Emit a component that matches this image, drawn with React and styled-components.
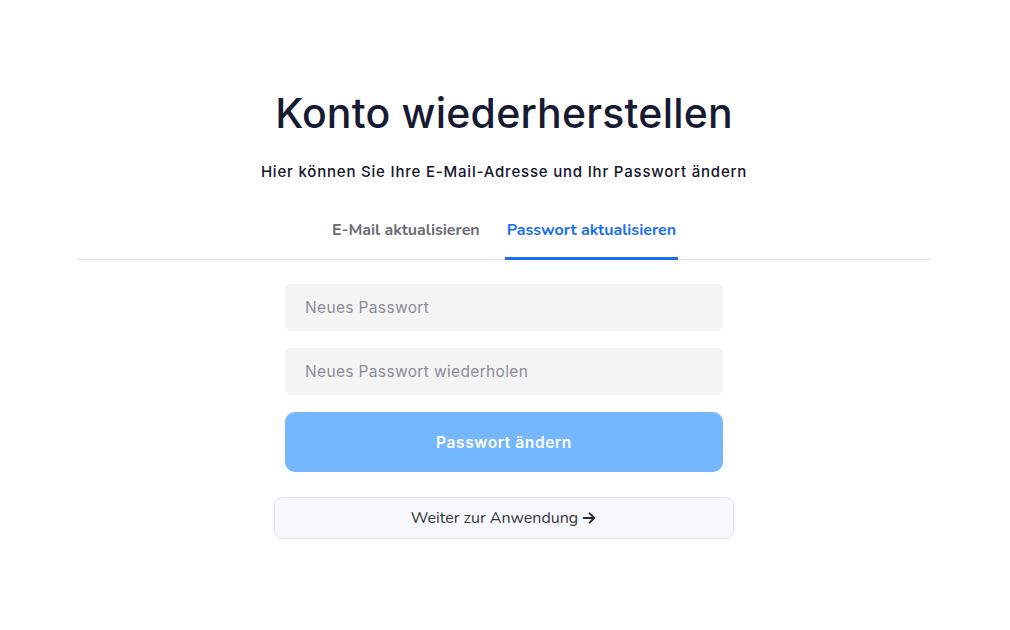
import React, { useState } from 'react';
import styled, { createGlobalStyle } from 'styled-components';

const GlobalStyle = createGlobalStyle`
  body {
    margin: 0;
    background: #ffffff;
    font-family: "Inter", "Noto Sans", sans-serif;
  }
`;

const Page = styled.div`
  width: 100%;
  min-height: 630px;
  display: flex;
  flex-direction: column;
  align-items: center;
  padding: 88px 80px 0 78px;
  box-sizing: border-box;
`;

const Title = styled.h1`
  margin: 0;
  font-family: "Inter", sans-serif;
  font-size: 41px;
  font-weight: 500;
  letter-spacing: 0.2px;
  color: #161b33;
  line-height: 50px;
`;

const Subtitle = styled.p`
  margin: 24px 0 0;
  font-family: "Inter", sans-serif;
  font-size: 15px;
  font-weight: 500;
  letter-spacing: 0.8px;
  color: #11142a;
  line-height: 20px;
`;

const Tabs = styled.div`
  margin-top: 29px;
  width: 100%;
  display: flex;
  justify-content: center;
  gap: 23px;
  border-bottom: 1px solid #dcdde3;
`;

const Tab = styled.button`
  background: none;
  border: none;
  padding: 8px 2px 16px;
  margin-bottom: -1px;
  font-family: "Nunito", "Noto Sans", sans-serif;
  font-size: 16px;
  font-weight: 700;
  color: ${(p) => (p.$active ? '#1a6ff0' : '#6b6b70')};
  border-bottom: 3px solid ${(p) => (p.$active ? '#1a6ff0' : 'transparent')};
  cursor: pointer;
`;

const Form = styled.form`
  margin-top: 24px;
  width: 438px;
  display: flex;
  flex-direction: column;
  gap: 17px;
`;

const Input = styled.input`
  height: 47px;
  border: none;
  border-radius: 6px;
  background: #f4f4f4;
  padding: 0 20px;
  font-family: "Inter", sans-serif;
  font-size: 15.5px;
  letter-spacing: 0.35px;
  color: #222;
  outline: none;

  &::placeholder {
    color: #8b8c99;
  }
`;

const Submit = styled.button`
  height: 60px;
  border: none;
  border-radius: 10px;
  background: #74b7fe;
  color: #ffffff;
  font-family: "Inter", sans-serif;
  font-size: 15.5px;
  font-weight: 600;
  letter-spacing: 0.6px;
  cursor: pointer;
`;

const Continue = styled.button`
  margin-top: 25px;
  width: 460px;
  height: 42px;
  border: 1px solid #e1e3eb;
  border-radius: 8px;
  background: #f7f8fc;
  color: #333338;
  font-family: "Nunito", "Noto Sans", sans-serif;
  font-size: 16px;
  display: flex;
  align-items: center;
  justify-content: center;
  gap: 3px;
  cursor: pointer;
`;

const Arrow = () => (
  <svg width="16" height="16" viewBox="0 0 24 24" fill="none" stroke="#2b2b33" strokeWidth="3" strokeLinecap="round" strokeLinejoin="round">
    <path d="M4 12h15" />
    <path d="M13 5l7 7-7 7" />
  </svg>
);

export default function App() {
  const [tab, setTab] = useState('password');
  return (
    <>
      <GlobalStyle />
      <Page>
        <Title>Konto wiederherstellen</Title>
        <Subtitle>Hier können Sie Ihre E-Mail-Adresse und Ihr Passwort ändern</Subtitle>
        <Tabs>
          <Tab $active={tab === 'email'} onClick={() => setTab('email')}>E-Mail aktualisieren</Tab>
          <Tab $active={tab === 'password'} onClick={() => setTab('password')}>Passwort aktualisieren</Tab>
        </Tabs>
        <Form onSubmit={(e) => e.preventDefault()}>
          <Input type="password" placeholder="Neues Passwort" />
          <Input type="password" placeholder="Neues Passwort wiederholen" />
          <Submit type="submit">Passwort ändern</Submit>
        </Form>
        <Continue>
          Weiter zur Anwendung <Arrow />
        </Continue>
      </Page>
    </>
  );
}
